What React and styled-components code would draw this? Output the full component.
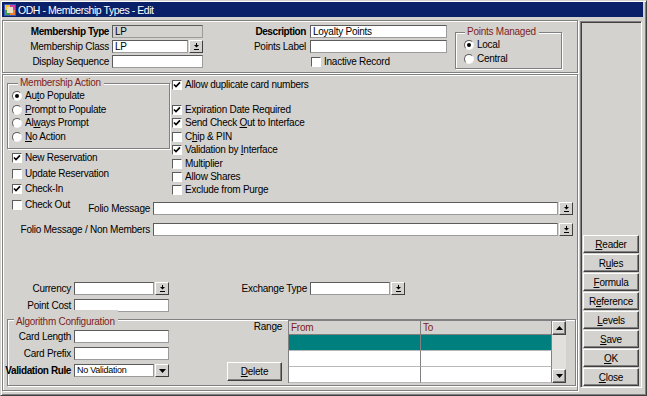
import React from 'react';
import styled, { createGlobalStyle } from 'styled-components';

const FACE = '#d4d2ce';
const SHADOW = '#808080';
const DKSHADOW = '#404040';
const CAPTION = '#7d1e1e';
const FONT = '"Liberation Sans", Arial, sans-serif';

const GlobalStyle = createGlobalStyle`
  html, body { margin: 0; padding: 0; background: ${FACE}; }
  body { font-family: ${FONT}; font-size: 10px; letter-spacing: -0.25px; color: #000; }
  * { box-sizing: border-box; }
`;

const Window = styled.div`
  width: 647px;
  height: 396px;
  display: flex;
  flex-direction: column;
  padding: 1px 3px 4px 1px;
  background: ${FACE};
  border: 1px solid;
  border-color: ${FACE} ${DKSHADOW} ${DKSHADOW} ${FACE};
  box-shadow: inset 1px 1px #fff, inset -1px -1px ${SHADOW};
`;

const TitleBar = styled.div`
  height: 15px;
  flex: none;
  display: flex;
  align-items: center;
  gap: 2px;
  padding-left: 2px;
  background: #0a2068;
  color: #fff;
  font-size: 10.5px;
  letter-spacing: -0.45px;
  white-space: nowrap;
`;

const Body = styled.div`
  flex: 1;
  min-height: 0;
  display: flex;
  gap: 2px;
  margin-top: 3px;
`;

const Main = styled.div`
  width: 576px;
  display: flex;
  flex-direction: column;
`;

const Section = styled.div`
  border: 1px solid ${SHADOW};
  box-shadow: inset 1px 1px #fff, 1px 1px #fff;
`;

const TopSection = styled(Section)`
  height: 53px;
  flex: none;
  display: flex;
  align-items: flex-start;
  padding-top: 4px;
`;

const LowerSection = styled(Section)`
  flex: 1;
  margin-top: 1px;
  display: flex;
  flex-direction: column;
`;

const FieldGrid = styled.div`
  display: grid;
  grid-template-columns: ${(p) => p.$cols};
  grid-auto-rows: 13px;
  column-gap: ${(p) => p.$gap ?? 3}px;
  row-gap: ${(p) => p.$rowGap ?? 2}px;
  align-items: center;
  margin-left: ${(p) => p.$ml ?? 0}px;
  margin-top: ${(p) => p.$mt ?? 0}px;
`;

const Label = styled.div`
  display: flex;
  justify-content: flex-end;
  white-space: nowrap;
  line-height: 13px;
  font-weight: ${(p) => (p.$bold ? 700 : 400)};
  letter-spacing: ${(p) => (p.$bold ? '-0.4px' : 'inherit')};
`;

const TextBox = styled.div`
  height: 13px;
  min-width: 0;
  flex: 1;
  padding: 0 2px;
  line-height: 11px;
  white-space: nowrap;
  overflow: hidden;
  font-size: ${(p) => (p.$small ? 9 : 10)}px;
  background: ${(p) => (p.$readOnly ? FACE : '#fff')};
  border: 1px solid;
  border-color: #5c5c5c #9c9c9c #9c9c9c #5c5c5c;
`;

const Combo = styled.div`
  display: flex;
  gap: 1px;
  height: 13px;
  min-width: 0;
  flex: 1;
`;

const ComboBtn = styled.div`
  width: 14px;
  height: 13px;
  flex: none;
  display: flex;
  align-items: center;
  justify-content: center;
  background: ${FACE};
  border: 1px solid;
  border-color: #fff ${DKSHADOW} ${DKSHADOW} #fff;
`;

const DropArrow = () => (
  <svg width="7" height="7" viewBox="0 0 7 7">
    <rect x="3" y="0" width="1" height="2" fill="#000" />
    <path d="M1 2 H6 L3.5 4.5 Z" fill="#000" />
    <rect x="1" y="6" width="5" height="1" fill="#000" />
  </svg>
);

const TriArrow = ({ up }) => (
  <svg width="7" height="4" viewBox="0 0 7 4">
    <path d={up ? 'M0 4 H7 L3.5 0 Z' : 'M0 0 H7 L3.5 4 Z'} fill="#000" />
  </svg>
);

const ComboField = ({ value, small, tri }) => (
  <Combo>
    <TextBox $small={small}>{value}</TextBox>
    <ComboBtn>{tri ? <TriArrow /> : <DropArrow />}</ComboBtn>
  </Combo>
);

const OptionRow = styled.div`
  display: flex;
  align-items: center;
  gap: 3px;
  height: ${(p) => p.$h}px;
  margin-top: ${(p) => p.$mt ?? 0}px;
  padding-left: ${(p) => p.$pl ?? 0}px;
  white-space: nowrap;
  line-height: 12px;
`;

const Box = styled.span`
  width: 10px;
  height: 10px;
  flex: none;
  display: flex;
  align-items: center;
  justify-content: center;
  background: #fff;
  border: 1px solid;
  border-color: #5c5c5c #fff #fff #5c5c5c;
`;

const Round = styled(Box)`
  border-radius: 50%;
  border-color: #5c5c5c #f4f4f4 #f4f4f4 #5c5c5c;
  &::after {
    content: '';
    width: 4px;
    height: 4px;
    border-radius: 50%;
    background: ${(p) => (p.$on ? '#000' : 'transparent')};
  }
`;

const Check = ({ on, label, h = 13, mt, pl }) => (
  <OptionRow $h={h} $mt={mt} $pl={pl}>
    <Box>
      {on && (
        <svg width="8" height="8" viewBox="0 0 8 8">
          <path d="M1 3.5 L3 5.6 L7 1.4" stroke="#000" strokeWidth="1.6" fill="none" />
        </svg>
      )}
    </Box>
    <span>{label}</span>
  </OptionRow>
);

const Radio = ({ on, label, h = 14, pl }) => (
  <OptionRow $h={h} $pl={pl}>
    <Round $on={on} />
    <span>{label}</span>
  </OptionRow>
);

const GroupBox = styled.fieldset`
  margin: ${(p) => p.$margin || 0};
  padding: 0 0 ${(p) => p.$pb ?? 0}px ${(p) => p.$pl ?? 0}px;
  min-width: 0;
  width: ${(p) => (p.$w ? `${p.$w}px` : 'auto')};
  height: ${(p) => (p.$h ? `${p.$h}px` : 'auto')};
  border: 1px solid ${SHADOW};
  box-shadow: inset 1px 1px #fff, 1px 1px #fff;
`;

const GroupTitle = styled.legend`
  margin-left: ${(p) => p.$ml ?? 0}px;
  padding: ${(p) => p.$pt ?? 0}px 3px 0 2px;
  line-height: 12px;
  color: ${CAPTION};
  background: ${FACE};
`;

const Stack = styled.div`
  display: flex;
  flex-direction: column;
  width: ${(p) => (p.$w ? `${p.$w}px` : 'auto')};
  margin-left: ${(p) => p.$ml ?? 0}px;
`;

const RowA = styled.div`
  display: flex;
  align-items: flex-start;
  margin-top: 2px;
`;

const FolioRow = styled.div`
  display: flex;
  align-items: flex-start;
  gap: 3px;
  padding-right: 4px;
  margin-top: ${(p) => p.$mt ?? 0}px;
`;

const FolioLead = styled.div`
  width: 147px;
  flex: none;
  display: flex;
  justify-content: space-between;
  align-items: flex-start;
`;

const FolioLabel = styled(Label)`
  margin-top: ${(p) => p.$mt ?? 0}px;
  margin-left: auto;
`;

const FolioCombo = styled.div`
  flex: 1;
  display: flex;
  margin-top: ${(p) => p.$mt ?? 0}px;
`;

const AlgoRow = styled.div`
  display: flex;
  align-items: flex-start;
`;

const RangeCol = styled.div`
  width: 119px;
  height: 63px;
  margin-top: -8px;
  padding: 0 6px 2px 0;
  display: flex;
  flex-direction: column;
  justify-content: space-between;
  align-items: flex-end;
`;

const RaisedButton = styled.div`
  display: flex;
  align-items: center;
  justify-content: center;
  background: ${FACE};
  border: 1px solid;
  border-color: #fff ${DKSHADOW} ${DKSHADOW} #fff;
  box-shadow: inset -1px -1px ${SHADOW};
  white-space: nowrap;
`;

const DeleteButton = styled(RaisedButton)`
  width: 55px;
  height: 19px;
`;

const RangeTable = styled.div`
  width: 278px;
  height: 63px;
  margin-top: -8px;
  display: grid;
  grid-template-columns: 1fr 14px;
  border-top: 1px solid ${SHADOW};
  border-left: 1px solid ${SHADOW};
`;

const Grid = styled.div`
  display: grid;
  grid-template-columns: 132px 1fr;
  grid-template-rows: 14px 16px 16px 16px;
`;

const HeadCell = styled.div`
  padding-left: 2px;
  line-height: 13px;
  color: ${CAPTION};
  background: ${FACE};
  border-bottom: 1px solid ${SHADOW};
  border-right: 1px solid ${SHADOW};
`;

const Cell = styled.div`
  background: ${(p) => (p.$sel ? '#007f7f' : '#fff')};
  border-bottom: 1px solid #b8b8b8;
  border-right: 1px solid ${SHADOW};
`;

const ScrollBar = styled.div`
  display: flex;
  flex-direction: column;
  justify-content: space-between;
  background: #e2e0dc;
`;

const ScrollBtn = styled(RaisedButton)`
  height: 14px;
`;

const Side = styled.div`
  width: 62px;
  margin: 1px 0 3px;
  display: flex;
  flex-direction: column;
  justify-content: flex-end;
  gap: 1px;
  padding: 0 2px 1px;
  border: 1px solid;
  border-color: ${SHADOW} #fff #fff ${SHADOW};
  box-shadow: inset 1px 1px ${DKSHADOW};
`;

const SideButton = styled(RaisedButton)`
  height: 18px;
`;

const Mn = ({ text, at }) => (
  <span>
    {text.slice(0, at)}
    <u>{text[at]}</u>
    {text.slice(at + 1)}
  </span>
);

const AppIcon = () => (
  <svg width="12" height="12" viewBox="0 0 12 12">
    <rect x="0" y="0" width="12" height="12" fill="#3a58b8" />
    <rect x="1" y="1" width="5" height="5" fill="#f2c230" />
    <rect x="6" y="1" width="5" height="5" fill="#d040a0" />
    <rect x="1" y="6" width="5" height="5" fill="#40a048" />
    <rect x="6" y="6" width="5" height="5" fill="#f08030" />
    <rect x="3" y="3" width="6" height="6" fill="#e8e0c8" />
  </svg>
);

const sideButtons = [
  ['Reader', 0],
  ['Rules', 1],
  ['Formula', 0],
  ['Reference', 1],
  ['Levels', 0],
  ['Save', 0],
  ['OK', 0],
  ['Close', 0],
];

export default function App() {
  return (
    <>
      <GlobalStyle />
      <Window>
        <TitleBar>
          <AppIcon />
          <span>ODH - Membership Types - Edit</span>
        </TitleBar>
        <Body>
          <Main>
            <TopSection>
              <FieldGrid $cols="106px 91px">
                <Label $bold>Membership Type</Label>
                <TextBox $readOnly>LP</TextBox>
                <Label>Membership Class</Label>
                <ComboField value="LP" />
                <Label>Display Sequence</Label>
                <TextBox />
              </FieldGrid>
              <FieldGrid $cols="90px 137px" $gap={4} $ml={13}>
                <Label $bold>Description</Label>
                <TextBox>Loyalty Points</TextBox>
                <Label>Points Label</Label>
                <TextBox />
                <span />
                <Check label="Inactive Record" pl={1} />
              </FieldGrid>
              <GroupBox $margin="1px 0 0 8px" $w={107} $h={43} $pl={8}>
                <GroupTitle $ml={1}>Points Managed</GroupTitle>
                <Radio on label="Local" />
                <Radio label="Central" />
              </GroupBox>
            </TopSection>

            <LowerSection>
              <RowA>
                <Stack $w={163} $ml={4}>
                  <GroupBox $h={72} $pl={4}>
                    <GroupTitle $ml={6}>Membership Action</GroupTitle>
                    <Radio on h={13.7} label={<Mn text="Auto Populate" at={2} />} />
                    <Radio h={13.7} label={<Mn text="Prompt to Populate" at={0} />} />
                    <Radio h={13.7} label={<Mn text="Always Prompt" at={2} />} />
                    <Radio h={13.7} label={<Mn text="No Action" at={0} />} />
                  </GroupBox>
                  <Check on h={15.7} mt={1} pl={5} label="New Reservation" />
                  <Check h={15.7} pl={5} label="Update Reservation" />
                  <Check on h={15.7} pl={5} label="Check-In" />
                </Stack>
                <Stack $ml={2}>
                  <Check on h={13.4} mt={1} label="Allow duplicate card numbers" />
                  <Check on h={13.4} mt={11.9} label="Expiration Date Required" />
                  <Check on h={13.4} label={<Mn text="Send Check Out to Interface" at={11} />} />
                  <Check h={13.4} label={<Mn text="Chip & PIN" at={1} />} />
                  <Check on h={13.4} label={<Mn text="Validation by Interface" at={14} />} />
                  <Check h={13.4} label="Multiplier" />
                  <Check h={13.4} label="Allow Shares" />
                  <Check h={13.4} label="Exclude from Purge" />
                </Stack>
              </RowA>

              <FolioRow>
                <FolioLead>
                  <Check h={16} pl={9} label="Check Out" />
                  <FolioLabel $mt={5}>Folio Message</FolioLabel>
                </FolioLead>
                <FolioCombo $mt={5}>
                  <ComboField />
                </FolioCombo>
              </FolioRow>

              <FolioRow $mt={8}>
                <FolioLead>
                  <FolioLabel>Folio Message / Non Members</FolioLabel>
                </FolioLead>
                <FolioCombo>
                  <ComboField />
                </FolioCombo>
              </FolioRow>

              <FieldGrid $cols="68px 95px 135px 95px" $rowGap={4} $mt={46}>
                <Label>Currency</Label>
                <ComboField />
                <Label>Exchange Type</Label>
                <ComboField />
                <Label>Point Cost</Label>
                <TextBox />
              </FieldGrid>

              <GroupBox $margin="-2px 1px 0 4px" $pb={2}>
                <GroupTitle $ml={6} $pt={6}>Algorithm Configuration</GroupTitle>
                <AlgoRow>
                  <FieldGrid $cols="63px 95px" $rowGap={4} $mt={2}>
                    <Label>Card Length</Label>
                    <TextBox />
                    <Label>Card Prefix</Label>
                    <TextBox />
                    <Label $bold>Validation Rule</Label>
                    <ComboField value="No Validation" small tri />
                  </FieldGrid>
                  <RangeCol>
                    <Label>Range</Label>
                    <DeleteButton>
                      <Mn text="Delete" at={0} />
                    </DeleteButton>
                  </RangeCol>
                  <RangeTable>
                    <Grid>
                      <HeadCell>From</HeadCell>
                      <HeadCell>To</HeadCell>
                      <Cell $sel />
                      <Cell $sel />
                      <Cell />
                      <Cell />
                      <Cell />
                      <Cell />
                    </Grid>
                    <ScrollBar>
                      <ScrollBtn>
                        <TriArrow up />
                      </ScrollBtn>
                      <ScrollBtn>
                        <TriArrow />
                      </ScrollBtn>
                    </ScrollBar>
                  </RangeTable>
                </AlgoRow>
              </GroupBox>
            </LowerSection>
          </Main>

          <Side>
            {sideButtons.map(([name, at]) => (
              <SideButton key={name}>
                <Mn text={name} at={at} />
              </SideButton>
            ))}
          </Side>
        </Body>
      </Window>
    </>
  );
}
